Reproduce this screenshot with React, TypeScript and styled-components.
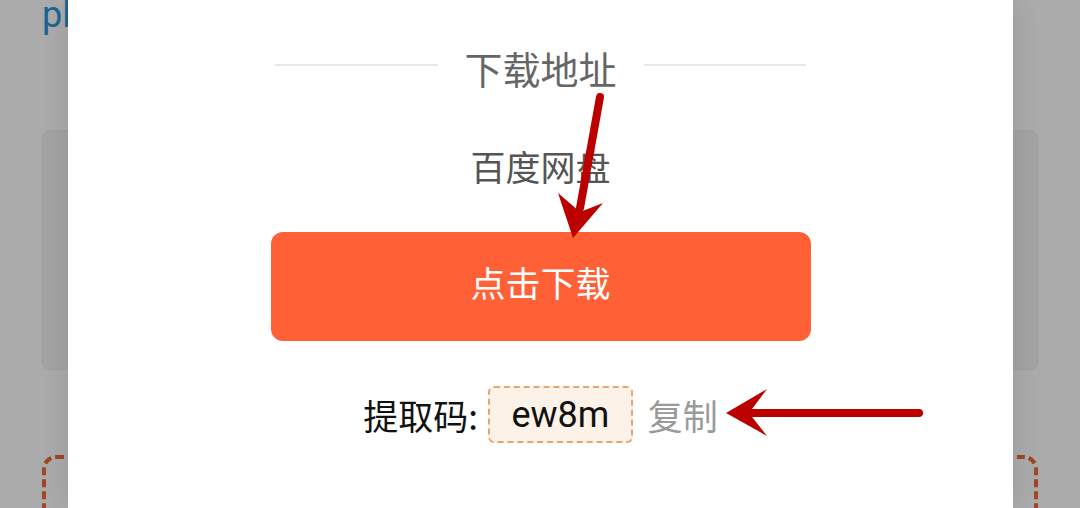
import styled, { createGlobalStyle } from "styled-components";

const GlobalStyle = createGlobalStyle`
  html, body {
    margin: 0;
    padding: 0;
    background: #fff;
  }
  body {
    font-family: "Noto Sans CJK SC", "Noto Sans", sans-serif;
  }
`;

const Screen = styled.div`
  position: relative;
  width: 1080px;
  height: 508px;
  overflow: hidden;
  background: #fff;
`;

// page that sits behind the dialog
const Page = styled.div`
  display: flex;
  flex-direction: column;
  padding: 0 42px;
`;

const PageHeading = styled.div`
  margin-top: -4px;
  font-family: Roboto, "Noto Sans", sans-serif;
  font-size: 36px;
  line-height: 38px;
  color: #2898dc;
`;

const InfoCard = styled.div`
  margin-top: 96px;
  height: 238px;
  border: 1px solid #ececec;
  border-radius: 8px;
  background: #f5f5f5;
`;

const DashedPanel = styled.div`
  margin-top: 85px;
  height: 120px;
  border: 4px dashed #ee6a3c;
  border-radius: 14px;
`;

const Overlay = styled.div`
  position: absolute;
  inset: 0;
  background: rgba(0, 0, 0, 0.33);
`;

const Dialog = styled.div`
  position: absolute;
  top: 0;
  bottom: 0;
  left: 68px;
  width: 945px;
  box-sizing: border-box;
  padding-top: 46px;
  display: flex;
  flex-direction: column;
  align-items: center;
  background: #fff;
  box-shadow: 0 0 28px rgba(0, 0, 0, 0.1);
`;

const TitleRow = styled.div`
  display: flex;
  align-items: center;
  gap: 27px;
  width: 531px;
  height: 44px;
`;

const Rule = styled.div`
  flex: 1;
  height: 2px;
  margin-bottom: 6px;
  background: #e8e8e8;
`;

const Title = styled.div`
  font-size: 38px;
  line-height: 44px;
  color: #666;
`;

const SourceName = styled.div`
  margin-top: 54px;
  font-size: 35px;
  line-height: 44px;
  color: #555;
`;

const DownloadButton = styled.button`
  margin-top: 44px;
  width: 540px;
  height: 109px;
  box-sizing: border-box;
  padding: 0 0 10px;
  display: flex;
  align-items: center;
  justify-content: center;
  border: none;
  border-radius: 12px;
  background: #ff6036;
  color: #fff;
  font-family: "Noto Sans CJK SC", sans-serif;
  font-size: 35px;
  line-height: 44px;
`;

const CodeRow = styled.div`
  margin-top: 45px;
  display: flex;
  align-items: center;
`;

const CodeLabel = styled.span`
  font-size: 35px;
  line-height: 44px;
  color: #111;
`;

const CodeBox = styled.span`
  margin-left: 10px;
  width: 145px;
  height: 57px;
  box-sizing: border-box;
  display: flex;
  align-items: center;
  justify-content: center;
  border: 2px dashed #e6a673;
  border-radius: 6px;
  background: #fdf2e8;
  font-family: Roboto, "Noto Sans", sans-serif;
  font-size: 36px;
  color: #111;
`;

const CopyLink = styled.span`
  margin-left: 15px;
  font-size: 35px;
  line-height: 44px;
  color: #9a9a9a;
`;

const Annotations = styled.svg`
  position: absolute;
  inset: 0;
  pointer-events: none;
`;

const ARROW_RED = "#bb0000";

export default function App() {
  return (
    <>
      <GlobalStyle />
      <Screen>
        <Page>
          <PageHeading>pl</PageHeading>
          <InfoCard />
          <DashedPanel />
        </Page>
        <Overlay />
        <Dialog>
          <TitleRow>
            <Rule />
            <Title>下载地址</Title>
            <Rule />
          </TitleRow>
          <SourceName>百度网盘</SourceName>
          <DownloadButton type="button">点击下载</DownloadButton>
          <CodeRow>
            <CodeLabel>提取码:</CodeLabel>
            <CodeBox>ew8m</CodeBox>
            <CopyLink>复制</CopyLink>
          </CodeRow>
        </Dialog>
        <Annotations width={1080} height={508} viewBox="0 0 1080 508">
          <path d="M600 97 L580 208" stroke={ARROW_RED} strokeWidth={8} strokeLinecap="round" fill="none" />
          <polygon points="573,238 558,193 580,212 603,203" fill={ARROW_RED} />
          <path d="M919 413 L748 413" stroke={ARROW_RED} strokeWidth={8} strokeLinecap="round" fill="none" />
          <polygon points="726,413 767,389 749,413 767,436" fill={ARROW_RED} />
        </Annotations>
      </Screen>
    </>
  );
}
